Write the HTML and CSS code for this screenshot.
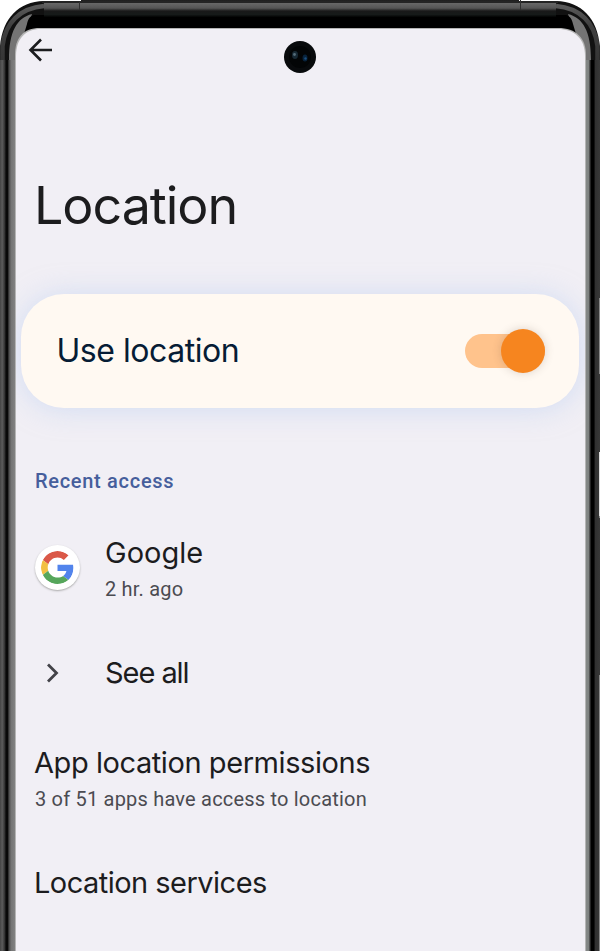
FILE: index.html
```html
<!DOCTYPE html>
<html lang="en">
<head>
<meta charset="utf-8">
<title>Location</title>
<link rel="stylesheet" href="styles.css">
</head>
<body>
<div class="phone">
  <svg class="frame" viewBox="0 0 600 951" aria-hidden="true">
    <defs>
      <linearGradient id="top" x1="0" y1="0" x2="0" y2="29" gradientUnits="userSpaceOnUse">
        <stop offset="0" stop-color="#202020"/><stop offset=".05" stop-color="#222"/><stop offset=".1" stop-color="#686868"/><stop offset=".28" stop-color="#555"/><stop offset=".38" stop-color="#191919"/><stop offset=".5" stop-color="#161a19"/><stop offset=".6" stop-color="#000"/><stop offset="1" stop-color="#000"/>
      </linearGradient>
      <linearGradient id="left" x1="0" y1="0" x2="16" y2="0" gradientUnits="userSpaceOnUse">
        <stop offset="0" stop-color="#444"/><stop offset=".14" stop-color="#5c5c5c"/><stop offset=".28" stop-color="#363636"/><stop offset=".38" stop-color="#080808"/><stop offset=".48" stop-color="#080808"/><stop offset=".56" stop-color="#484848"/><stop offset=".7" stop-color="#747474"/><stop offset="1" stop-color="#858585"/>
      </linearGradient>
      <linearGradient id="right" x1="585" y1="0" x2="600" y2="0" gradientUnits="userSpaceOnUse">
        <stop offset="0" stop-color="#888b8a"/><stop offset=".25" stop-color="#7e8280"/><stop offset=".32" stop-color="#444"/><stop offset=".42" stop-color="#000"/><stop offset=".6" stop-color="#000"/><stop offset=".68" stop-color="#303030"/><stop offset="1" stop-color="#383838"/>
      </linearGradient>
      <linearGradient id="edge" x1="0" y1="4" x2="0" y2="58" gradientUnits="userSpaceOnUse">
        <stop offset="0" stop-color="#5c5c5c"/><stop offset=".4" stop-color="#404040"/><stop offset="1" stop-color="#363636"/>
      </linearGradient>
      <g id="corner">
        <path d="M0 60V0H44V60Z" fill="#111"/>
        <path d="M2.500 60V46C5 23 20 8 44 6" fill="none" stroke="url(#edge)" stroke-width="4.500"/>
        <path d="M9 60C9 31 17 18 32 14L25 34H40V60Z" fill="#747474"/>
        <path d="M44 15H34C30 16 28 19 27 24L24 34H44Z" fill="#000"/>
        <path d="M0 0H44V1C18 2 3 18 0 46Z" fill="#fff"/>
      </g>
    </defs>
    <path d="M0 0H600V29H0Z" fill="url(#top)"/>
    <path d="M0 46H16V951H0Z" fill="url(#left)"/>
    <path d="M585 46H600V951H585Z" fill="url(#right)"/>
    <use href="#corner"/>
    <use href="#corner" transform="matrix(-1 0 0 1 600 0)"/>
    <path d="M40 0H81V1H40ZM519 0H560V1H519Z" fill="#fff"/>
    <path d="M42 2H558" stroke="#242424" stroke-width="2"/>
    <path d="M79.500 2V10M520.500 0V10" stroke="#303030"/>
    <path d="M599.500 298V374M599.500 452V518M599.500 675V951" stroke="#888"/>
    <path d="M599.500 452V516" stroke="#ddd"/>
    <path d="M15 951V55C15 38 23 28 40 28H558C576 28 586 38 586 55V951Z" fill="#b5b5b5"/>
    <path d="M16 951V56C16 39 25 29 41 29H557C575 29 585 39 585 56V951Z" fill="#f1eff5"/>
  </svg>
  <main class="screen">
    <header class="bar">
      <svg class="back" viewBox="0 0 24 24"><path d="M23.500 12H2M12.500 1.500L2 12L12.500 22.500"/></svg>
      <svg class="camera" viewBox="0 0 34 34"><circle cx="17" cy="17" r="16" fill="#080a0c"/><circle cx="17" cy="17" r="11" fill="#030506"/><ellipse cx="12" cy="15" rx="3" ry="4" fill="#172934"/><circle cx="11.500" cy="14.500" r="1.400" fill="#556c78"/><ellipse cx="22" cy="18" rx="2.500" ry="3.500" fill="#08233c"/><circle cx="22.500" cy="18.500" r="1.200" fill="#1b5080"/></svg>
    </header>
    <h1 class="title"><span>Location</span></h1>
    <section class="toggle-card">
      <span class="toggle-label">Use location</span>
      <span class="switch"><span class="knob"></span></span>
    </section>
    <h2 class="section">Recent access</h2>
    <div class="row google">
      <span class="slot"><svg class="logo" viewBox="0 0 48 48"><path fill="#da5848" d="M24 9.500c3.540 0 6.710 1.220 9.210 3.600l6.850-6.850C35.900 2.380 30.470 0 24 0 14.620 0 6.510 5.380 2.560 13.220l7.980 6.190C12.430 13.720 17.740 9.500 24 9.500z"/><path fill="#5284ec" d="M46.980 24.550c0-1.570-.15-3.090-.38-4.550H24v9.020h12.940c-.58 2.960-2.260 5.480-4.780 7.180l7.730 6c4.510-4.180 7.090-10.360 7.090-17.650z"/><path fill="#f2c042" d="M10.530 28.590A14.500 14.500 0 0 1 10.530 19.410l-7.970-6.190A24 24 0 0 0 2.560 34.780z"/><path fill="#56a65b" d="M24 48c6.480 0 11.930-2.130 15.890-5.810l-7.730-6c-2.150 1.450-4.920 2.300-8.160 2.300-6.260 0-11.570-4.220-13.470-9.910l-7.980 6.190C6.510 42.620 14.620 48 24 48z"/></svg></span>
      <div class="lines"><span class="name n-google">Google</span><span class="sub s-ago">2 hr. ago</span></div>
    </div>
    <div class="row see">
      <span class="slot"><svg class="chevron" viewBox="0 0 12 20"><path d="M1 1.500L9.500 10L1 18.500"/></svg></span>
      <span class="name n-see">See all</span>
    </div>
    <div class="lines permissions"><span class="name n-app">App location permissions</span><span class="sub s-apps">3 of 51 apps have access to location</span></div>
    <div class="lines services"><span class="name n-services">Location services</span></div>
  </main>
</div>
</body>
</html>
```
FILE: styles.css
```css
* { box-sizing: border-box; }
body { margin: 0; background: #fff; color: #1c1c1e; font-family: Inter, sans-serif; font-variant-ligatures: none; }
.phone { position: relative; width: 600px; height: 951px; overflow: hidden; }
.frame { position: absolute; inset: 0; width: 600px; height: 951px; }
.screen { position: relative; margin: 0 15px 0 16px; padding-top: 29px; height: 951px; overflow: hidden; }
.bar { position: relative; height: 140px; padding: 9px 0 0 12px; }
.back { display: block; width: 25px; height: 24px; fill: none; stroke: #1b1c1e; stroke-width: 2.600; }
.camera { position: absolute; left: 267px; top: 11px; width: 34px; height: 34px; }
.title { margin: 0; padding-left: 18px; height: 125px; font-size: 52px; font-weight: 400; line-height: 74px; letter-spacing: -1.050px; }
.toggle-card { display: flex; align-items: center; justify-content: space-between; width: 558px; height: 114px; margin-left: 5px; padding: 0 34px 0 35.500px; border-radius: 43px; background: #fff9f2; box-shadow: 0 1px 28px rgba(178,201,242,.5); }
.toggle-label { padding-bottom: 1px; color: #061c35; font-size: 32px; font-weight: 400; line-height: 40px; letter-spacing: -.45px; }
.switch { display: flex; align-items: center; justify-content: flex-end; width: 80px; height: 34px; border-radius: 17px; background: #ffc38c; }
.knob { width: 44px; height: 44px; border-radius: 50%; background: #f6851f; box-shadow: 0 0 10px rgba(80,60,50,.2); }
.section { margin: 58px 0 0 19px; height: 66px; color: #465e9c; font: 500 20px/30px Roboto, sans-serif; letter-spacing: .7px; }
.row { display: flex; padding-left: 19px; }
.slot { display: flex; align-items: center; width: 70px; }
.google { height: 74px; }
.google .slot { height: 70px; }
.logo { width: 45px; height: 45px; padding: 6px; border-radius: 50%; background: #fff; box-shadow: 0 1px 2px #aaa; }
.lines { display: flex; flex-direction: column; }
.name { font-size: 29px; font-weight: 400; line-height: 42px; white-space: nowrap; }
.n-google { letter-spacing: 0; }
.n-see { letter-spacing: -1.050px; }
.n-app { letter-spacing: -.43px; }
.n-services { letter-spacing: -.53px; }
.sub { font: 400 20px/30px Roboto, sans-serif; color: #4b4b51; white-space: nowrap; letter-spacing: .2px; }
.see { height: 40px; margin-top: 46px; }
.chevron { width: 12px; height: 20px; margin: 1px 0 0 12px; fill: none; stroke: #434348; stroke-width: 2.800; }
.permissions { margin-top: 50px; padding-left: 18px; }
.permissions .sub { padding-left: 1px; }
.services { margin-top: 48px; padding-left: 18px; }
```
